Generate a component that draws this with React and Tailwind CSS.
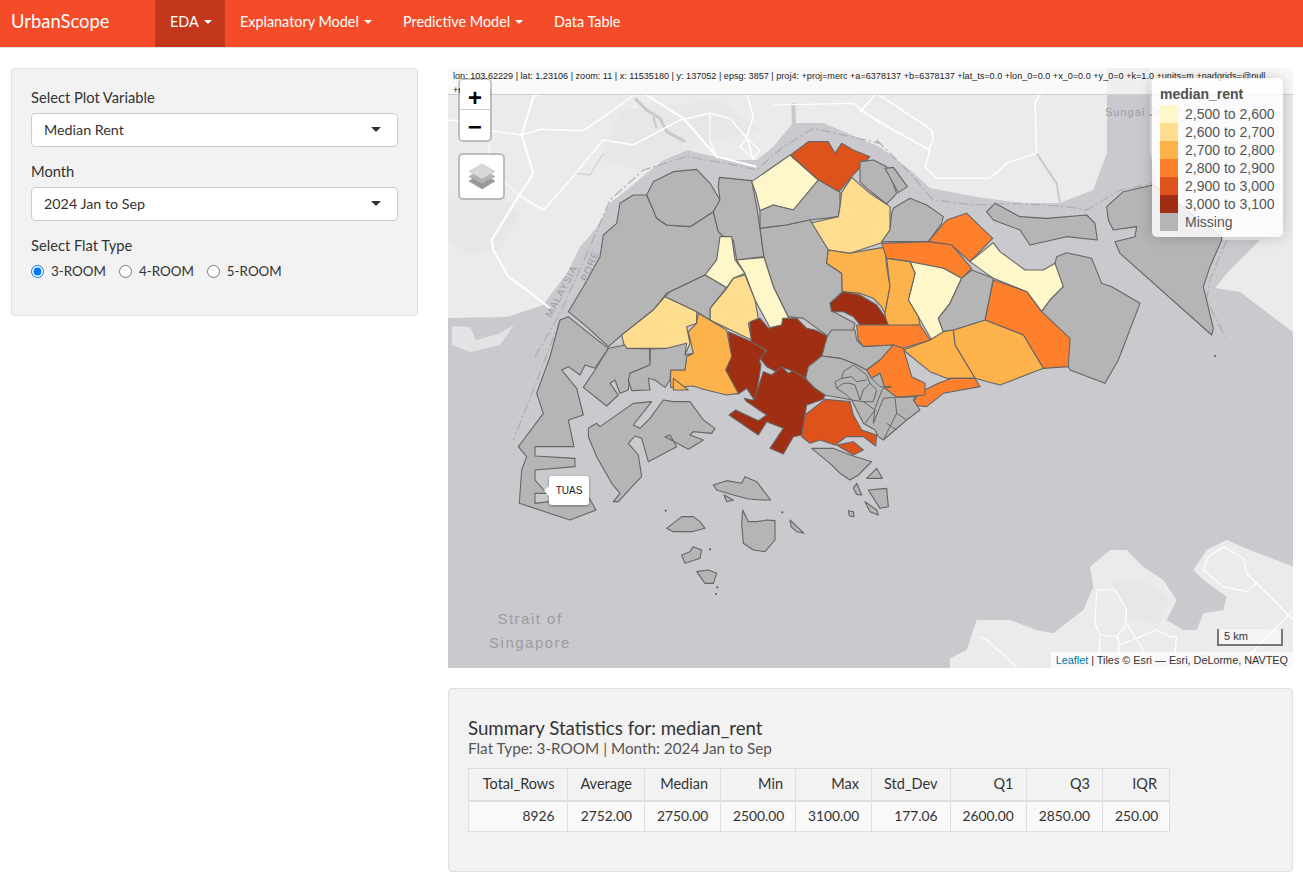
import { useState } from 'react';

const FONT = "font-['Lato','Open_Sans',sans-serif]";
const ARIAL = "font-['Liberation_Sans',Arial,sans-serif]";

// map outlines are traced per crop: [originX, originY] and coordinates at 3x
const Z2 = [440, 60];
const Z3 = [860, 60];
const Z4 = [500, 300];
const Z6 = [950, 530];
const Z7 = [700, 280];

const C = {
  gray: '#b5b5b5',
  c1: '#fff6c9',
  c2: '#fede8e',
  c3: '#feb24c',
  c4: '#fe7f2c',
  c5: '#de521b',
  c6: '#a02e12',
};

const AREAS = [
  [Z2, C.gray, '385,755 430,680 480,590 490,525 530,490 540,430 580,405 620,405 640,450 650,475 680,495 750,500 820,455 835,515 848,527 830,600 795,645 680,700 640,750 590,790 545,825 505,860 440,800'],
  [Z2, C.gray, '620,405 640,365 700,335 770,328 810,370 840,420 820,455 750,500 680,495 650,475 640,450'],
  [Z2, C.gray, '838,352 935,362 950,440 960,505 972,590 890,600 880,540 848,527 835,515 820,455 840,420 835,380'],
  [Z2, C.c1, '935,365 1050,285 1135,360 1060,450 1000,435 960,452 948,400'],
  [Z2, C.c5, '1052,285 1105,245 1165,245 1185,280 1205,250 1240,270 1290,290 1235,350 1195,397 1135,360'],
  [Z2, C.gray, '960,452 1000,435 1060,450 1135,360 1200,397 1200,440 1195,470 1110,480 1040,495 960,505'],
  [Z2, C.c2, '1205,397 1235,352 1290,400 1350,440 1350,510 1325,548 1230,580 1165,570 1110,490 1195,470 1200,440'],
  [Z2, C.gray, '960,505 1040,495 1110,480 1165,570 1160,610 1205,640 1207,695 1170,730 1180,755 1245,790 1240,810 1165,830 1090,775 1045,770 1000,680 972,590'],
  [Z2, C.c1, '840,530 875,530 885,600 915,640 880,655 860,683 795,645 830,600'],
  [Z2, C.c1, '890,600 972,592 1000,680 1045,772 1025,795 990,803 945,720 915,640'],
  [Z2, C.c2, '915,645 945,720 955,775 925,790 935,840 810,780 810,745 860,685 880,655'],
  [Z2, C.gray, '795,645 860,683 810,745 810,780 770,755 675,710 690,695'],
  [Z2, C.c2, '675,710 770,755 770,790 740,800 750,850 735,885 680,865 555,865 545,825 640,750'],
  [Z2, C.c3, '1165,570 1230,580 1325,563 1335,565 1340,620 1350,680 1335,760 1325,740 1300,715 1260,700 1207,695 1205,640 1160,610'],

  [Z3, C.gray, '0,305 40,300 80,320 110,400 80,432 20,385 0,365'],
  [Z3, C.gray, '75,325 100,322 142,380 115,398'],
  [Z3, C.gray, '100,445 150,415 200,435 250,470 245,490 205,545 65,545 90,510 95,460'],
  [Z3, C.c4, '205,545 260,480 320,460 398,535 330,605 275,555'],
  [Z3, C.c4, '65,550 205,545 275,555 335,625 305,655 250,625 150,605 80,595'],
  [Z3, C.c1, '330,605 400,548 420,575 495,630 550,630 585,610 605,650 610,680 570,720 545,755 500,695 400,655'],
  [Z3, C.gray, '380,455 405,430 480,470 560,475 680,465 705,490 712,540 620,530 510,555 480,510 400,480'],
  [Z3, C.gray, '545,755 570,720 610,680 585,610 590,590 620,578 695,595 725,670 755,680 840,730 775,900 735,970 630,930'],
  [Z3, C.gray, '740,440 790,395 880,375 1085,530 1085,540 1050,620 1030,680 1060,805 1055,825 780,580 765,545 825,530 830,500 760,510 745,480'],
  [Z3, C.c4, '400,660 500,695 545,755 630,835 625,920 550,925 490,825 375,780'],
  [Z3, C.c3, '280,810 375,780 490,825 550,925 420,975 345,955 285,855'],
  [Z3, C.c1, '150,605 250,625 305,655 270,730 235,775 255,830 215,840 175,770 145,720 165,640'],
  [Z3, C.gray, '305,655 335,630 400,655 375,780 280,810 250,815 235,775 270,730'],
  [Z3, C.c3, '80,595 150,605 165,640 145,720 175,770 180,795 80,800 75,760 90,680'],
  [Z3, C.c3, '250,815 280,810 285,855 345,955 260,955 210,935 130,870 210,840'],
  [Z3, C.c4, '156,1035 175,1000 235,970 275,955 345,955 360,980 250,1000 200,1040'],

  [Z7, C.c6, '390,70 430,35 480,45 530,75 555,110 565,135 480,135 460,110 430,95 395,95'],
  [Z7, C.c4, '470,135 565,135 660,135 690,180 610,205 580,195 490,200 475,180'],
  [Z7, C.gray, '395,150 465,150 470,180 490,200 580,195 540,240 500,270 460,250 420,235 365,228 380,170'],
  [Z7, C.c4, '500,270 540,240 580,195 610,205 635,290 675,310 675,345 590,352 555,325 540,280 515,295'],
  [Z7, C.c6, '150,125 180,115 205,145 245,135 248,115 290,115 320,145 345,150 382,168 365,228 320,290 305,295 270,270 245,262 235,278 200,260 180,235 200,212 155,185 150,150'],
  [Z7, C.c6, '85,155 155,185 198,212 178,240 183,255 170,340 165,362 140,325 115,342 90,335 75,290 75,265 93,235'],
  [Z7, C.gray, '318,290 325,260 365,228 420,235 460,250 500,270 515,295 540,280 555,325 590,352 650,350 640,360 660,390 620,420 585,450 550,480 535,470 525,450 490,430 455,360 430,355 370,345 345,340 325,325'],

  [Z4, C.c6, '763,298 790,215 815,225 845,200 865,220 880,212 915,235 945,265 975,285 970,298 920,315 905,405 880,410 850,462 810,445 850,385 800,365 775,405 687,345 707,330 775,362 800,345 740,305 733,295 755,300'],
  [Z4, C.c3, '595,40 680,90 695,170 677,210 715,280 680,285 610,268 580,258 512,262 512,210 555,210 560,165 580,160 565,95 590,70'],
  [Z4, C.c3, '520,235 565,270 520,270'],
  [Z4, C.gray, '325,145 375,135 380,145 450,147 450,195 390,220 385,270 360,280 345,240 330,250 355,285 320,318 250,262 285,210'],
  [Z4, C.gray, '450,147 500,145 560,130 555,165 580,160 560,170 555,210 512,210 510,240 495,262 465,240 445,235 450,270 395,272 385,240 390,220 450,195'],
  [Z4, C.gray, '180,60 205,50 260,95 325,145 285,205 255,195 240,225 205,200 185,210 230,265 250,345 205,360 222,440 105,440 105,468 225,475 225,500 105,510 105,540 140,580 105,580 105,610 265,590 288,630 210,660 58,610 65,510 80,470 55,440 70,420 130,340 110,280 150,170'],
  [Z4, C.gray, '265,385 290,370 300,380 400,310 455,305 400,375 420,385 450,355 490,300 520,305 570,305 610,360 645,385 635,400 580,395 570,405 610,420 565,448 495,410 510,405 530,440 445,485 425,415 405,408 385,430 415,465 425,530 410,545 355,605 340,605 360,580 335,550 290,470 265,410'],
  [Z4, C.c5, '905,410 915,345 975,298 1050,305 1060,345 1085,390 1130,405 1127,438 1090,410 1040,410 1005,435 960,420 930,430'],
  [Z4, C.c5, '1010,435 1060,425 1090,450 1060,465'],
  [Z4, C.gray, '935,445 1000,445 1050,465 1115,485 1075,525 1050,540 1020,520 990,490'],
  [Z4, C.gray, '1100,535 1130,505 1147,535'],
  [Z4, C.gray, '1060,565 1070,550 1085,585 1070,583'],
  [Z4, C.gray, '640,555 680,542 725,550 735,530 770,545 812,600 785,600 745,597 700,585 650,570'],
  [Z4, C.gray, '500,685 545,650 580,650 600,665 615,685 575,695 520,695'],
  [Z4, C.gray, '728,630 745,665 770,665 800,660 825,662 825,720 795,755 760,750 730,730 725,670'],
  [Z4, C.gray, '870,660 912,700 890,695 873,680'],
  [Z4, C.gray, '545,765 570,755 580,740 605,750 600,775 555,790'],
  [Z4, C.gray, '590,815 625,810 650,820 640,850 615,850'],
  [Z4, C.gray, '1095,605 1130,630 1135,645 1110,635'],
  [Z4, C.gray, '1105,570 1160,565 1165,620 1140,625'],
  [Z4, C.gray, '1045,632 1060,635 1062,650 1048,648'],
  [Z4, C.gray, '672,585 700,600 680,605'],
];

// borders between the small central districts
const INNER = [
  [Z7, '405,305 425,295 430,275 460,255 500,285 510,310 490,330 480,360 465,315 450,310 430,310 410,325 405,305'],
  [Z7, '425,295 455,290 470,305 500,300'],
  [Z7, '410,325 440,345 455,360 490,365 525,390 495,430'],
  [Z7, '510,310 530,330 520,365 490,365'],
  [Z7, '515,295 540,320 575,320 548,325 525,385 520,430 550,355 585,352 590,400 550,480'],
  [Z7, '590,400 620,420'],
  [Z7, '560,430 590,450'],
  [Z2, '630,865 630,900'],
];

const ROADS = [
  [Z2, '330,745 260,690 205,650 160,570 155,540 235,410 280,340 245,225 280,110 300,100', 2],
  [Z2, '24,180 70,185 130,210 245,225 300,208 430,212 520,150 580,105', 1.5],
  [Z2, '235,405 310,450 390,360 490,240 580,255 720,180 810,160 870,175 920,235', 1.5],
  [Z2, '620,105 730,175 830,290 950,320', 2],
  [Z2, '920,100 940,170 920,230 940,300', 1.5],
  [Z2, '810,165 810,240 830,295', 1.2],
  [Z2, '920,235 960,270 940,295 900,260 920,235', 1.2],
  [Z2, '1000,135 1240,130 1320,190', 1.2],
  [Z2, '150,250 140,310 235,405', 1],
  [Z3, '0,150 100,210 210,270 195,320 230,355 390,355 440,310 530,280 525,130 550,80', 1.5],
  [Z3, '0,80 50,100 0,155', 1.5],
  [Z3, '50,100 215,210 220,240 205,270', 1.5],
  [Z6, '440,180 495,180 530,240 525,290 500,320 450,315 435,280 440,180', 1.2],
  [Z6, '500,320 510,345 620,300 660,320 680,320 670,415', 1.2],
  [Z6, '530,280 580,360 590,415', 1.2],
  [Z6, '450,320 445,415', 1.2],
  [Z6, '505,320 510,415', 1.2],
  [Z6, '775,80 820,50 880,85 890,130 920,160 1030,270', 1.2],
  [Z6, '775,80 760,120 820,170 890,185 920,160', 1.2],
  [Z6, '860,415 1030,240', 1.2],
  [Z6, '90,320 110,330 200,410', 1.2],
];

const RIVERS = [
  [Z2, '585,115 620,150 660,175 680,215 735,245', 3],
  [Z2, '1060,130 1062,190', 4],
  [Z2, '640,170 650,205', 2],
  [Z2, '410,340 450,345 490,280', 1],
  [Z3, '530,280 590,370 600,430', 2],
];

const BOUNDARY = [
  [Z2, '285,890 360,760 450,560 510,420 610,330 740,290 860,310 950,330 1030,260 1120,205 1320,250'],
  [Z3, '50,240 150,340 220,420 340,435 480,430 620,440 680,450 780,390 880,370'],
  [Z3, '1100,540 1050,660 1040,720 1100,840'],
  [Z4, '180,60 100,270 40,420'],
];

const DOTS = [
  [Z3, 1065, 888], [Z4, 497, 632], [Z4, 847, 637], [Z4, 652, 862], [Z4, 648, 882], [Z4, 630, 748],
];

const LEGEND = [
  [C.c1, '2,500 to 2,600'],
  [C.c2, '2,600 to 2,700'],
  [C.c3, '2,700 to 2,800'],
  [C.c4, '2,800 to 2,900'],
  [C.c5, '2,900 to 3,000'],
  [C.c6, '3,000 to 3,100'],
  [C.gray, 'Missing'],
];

const STATS = [
  ['Total_Rows', '8926', 'w-[98.5px]'],
  ['Average', '2752.00', 'w-[77.5px]'],
  ['Median', '2750.00', 'w-[76px]'],
  ['Min', '2500.00', 'w-[75px]'],
  ['Max', '3100.00', 'w-[76px]'],
  ['Std_Dev', '177.06', 'w-[78.5px]'],
  ['Q1', '2600.00', 'w-[76px]'],
  ['Q3', '2850.00', 'w-[76.5px]'],
  ['IQR', '250.00', 'w-[67px]'],
];

const at = ([x, y]) => `translate(${x} ${y}) scale(0.33333)`;

function SingaporeMap() {
  return (
    <svg viewBox="448 68 845 600" className="block w-full h-full">
      <rect x="448" y="68" width="845" height="600" fill="#c9c9ce" />
      {/* land */}
      <polygon fill="#ebebeb" points="448,68 1107,68 1107,153 1093,190 1060,203 1020,203 977,197 930,188 910,170 880,147 823,123 793,123 773,147 757,160 733,160 707,155 687,150 667,157 647,173 627,190 610,203 597,227 580,247 567,273 543,305 507,317 448,318" />
      <polygon fill="#ebebeb" points="1150,68 1293,68 1293,332 1240,292 1215,288 1228,272 1260,240 1190,240 1165,235 1150,150" />
      <polygon fill="#e7e7e7" points="448,200 500,190 520,215 500,250 470,255 448,240" />
      <polygon fill="#e7e7e7" points="620,110 720,100 760,130 700,145 640,170 600,160" />
      <polygon fill="#e3e3e5" points="452,326 470,327 476,340 498,334 514,325 500,345 470,352 452,345" />
      <g transform={at(Z6)}>
        <polygon fill="#ebebeb" points="0,415 0,385 50,360 80,270 180,270 260,300 310,310 400,240 430,170 420,110 480,60 530,60 580,110 640,150 680,210 650,270 700,300 740,300 760,250 820,240 830,200 760,150 730,120 770,60 830,30 900,60 1030,110 1030,415" />
        <polygon fill="#e7e7e7" points="480,150 600,160 660,210 630,280 540,270" />
      </g>
      {RIVERS.map(([o, p, w], i) => (
        <polyline key={i} transform={at(o)} points={p} fill="none" stroke="#c9c9ce" strokeWidth={w} vectorEffect="non-scaling-stroke" />
      ))}
      {ROADS.map(([o, p, w], i) => (
        <polyline key={i} transform={at(o)} points={p} fill="none" stroke="#ffffff" strokeWidth={w} vectorEffect="non-scaling-stroke" />
      ))}
      {BOUNDARY.map(([o, p], i) => (
        <polyline key={i} transform={at(o)} points={p} fill="none" stroke="#adadb2" strokeWidth="1.2" strokeDasharray="10 3 2 3" vectorEffect="non-scaling-stroke" />
      ))}
      {/* planning areas */}
      {AREAS.map(([o, f, p], i) => (
        <polygon key={i} transform={at(o)} points={p} fill={f} stroke="#666666" strokeWidth="1.1" strokeLinejoin="round" vectorEffect="non-scaling-stroke" />
      ))}
      {INNER.map(([o, p], i) => (
        <polyline key={i} transform={at(o)} points={p} fill="none" stroke="#666666" strokeWidth="1" vectorEffect="non-scaling-stroke" />
      ))}
      {DOTS.map(([o, x, y], i) => (
        <circle key={i} transform={at(o)} cx={x} cy={y} r="3" fill="#555555" />
      ))}
      {/* basemap labels */}
      <g fill="#9c9ca1" className={ARIAL}>
        <text x="530" y="624" textAnchor="middle" fontSize="15" letterSpacing="1.5">Strait of</text>
        <text x="530" y="648" textAnchor="middle" fontSize="15" letterSpacing="1.5">Singapore</text>
        <text x="1105" y="116" fontSize="11" letterSpacing="1">Sungai Johor</text>
        <text transform="translate(551 318) rotate(-62)" fontSize="10" letterSpacing="1">MALAYSIA</text>
        <text transform="translate(587 282) rotate(-68)" fontSize="10" letterSpacing="1">PORE</text>
        <text x="1200" y="663" fontSize="11" letterSpacing="1" fill="#c4c4c4">PULAU BATAM</text>
      </g>
    </svg>
  );
}

function MapPanel() {
  return (
    <div className={`relative h-[600px] overflow-hidden ${ARIAL}`}>
      <SingaporeMap />

      <div className="absolute inset-x-0 top-0 h-[27px] px-[5px] bg-white/70 border-b border-[#d0d0d0] text-[9.1px] leading-[14px] pt-[1px] text-[#222] overflow-hidden">
        lon: 103.62229 | lat: 1.23106 | zoom: 11 | x: 11535180 | y: 137052 | epsg: 3857 | proj4: +proj=merc +a=6378137 +b=6378137 +lat_ts=0.0 +lon_0=0.0 +x_0=0.0 +y_0=0 +k=1.0 +units=m +nadgrids=@null +no_defs
      </div>

      {/* zoom buttons */}
      <div className="absolute left-[10px] top-[10px] w-[34px] border-2 border-black/20 rounded-[5px] bg-clip-padding">
        <div className="h-[30px] pt-[10px] bg-white rounded-t-[3px] border-b border-[#ccc] flex items-center justify-center text-[24px] leading-none font-bold text-black font-['Liberation_Mono',monospace]">+</div>
        <div className="h-[30px] pt-[8px] bg-white rounded-b-[3px] flex items-center justify-center text-[24px] leading-none font-bold text-black font-['Liberation_Mono',monospace]">−</div>
      </div>

      {/* layers button */}
      <div className="absolute left-[10px] top-[85px] w-[47px] h-[47px] bg-white border-2 border-black/20 rounded-[5px] bg-clip-padding flex items-center justify-center">
        <svg width="28" height="27" viewBox="0 0 28 27">
          <path d="M14 11 L27 18 L14 26 L1 18 Z" fill="#9a9a9a" stroke="#888" strokeWidth=".5" />
          <path d="M14 6.5 L27 13.5 L14 21 L1 13.5 Z" fill="#b4b4b4" stroke="#8c8c8c" strokeWidth=".5" />
          <path d="M14 1 L27 8.5 L14 16 L1 8.5 Z" fill="#d8d8d8" stroke="#b5b5b5" strokeWidth=".5" />
        </svg>
      </div>

      {/* legend */}
      <div className="absolute right-[10px] top-[10px] w-[131px] h-[159px] bg-white/80 rounded-[5px] shadow-[0_0_15px_rgba(0,0,0,0.2)] pl-2 pt-[7px] text-[14px] leading-[18px] text-[#555]">
        <div className="font-bold text-[#505050] leading-[18px] mb-[2px]">median_rent</div>
        {LEGEND.map(([color, label]) => (
          <div key={label} className="flex h-[18px] items-center">
            <span className="w-[18px] h-[18px] mr-[7px]" style={{ backgroundColor: color }} />
            <span>{label}</span>
          </div>
        ))}
      </div>

      {/* scale bar */}
      <div className="absolute right-[10px] bottom-[22px] w-[66px] h-[17px] border-x-2 border-b-2 border-[#777] bg-white/50 text-[11px] leading-[15px] pl-[5px] text-[#333]">
        5 km
      </div>

      <div className="absolute right-0 bottom-0 h-[16px] px-[5px] bg-white/70 text-[10.85px] leading-[16px] text-[#333] whitespace-nowrap">
        <a href="#leaflet" className="text-[#0078a8]">Leaflet</a> | Tiles © Esri — Esri, DeLorme, NAVTEQ
      </div>

      {/* hover tooltip */}
      <div className="absolute left-[101px] top-[408px] w-[40px] h-[29px] bg-white rounded-[3px] shadow-[0_1px_3px_rgba(0,0,0,0.4)] flex items-center justify-center text-[10px] text-[#222]">
        <span className="absolute left-[-5px] top-[10px] border-y-[5px] border-r-[5px] border-y-transparent border-r-white" />
        TUAS
      </div>
    </div>
  );
}

function SelectField({ label, value, onChange, options }) {
  return (
    <div className="mb-[14px]">
      <label className="block mb-[5px] leading-[21px] text-[14.7px]">{label}</label>
      <div className="relative">
        <select
          value={value}
          onChange={(e) => onChange(e.target.value)}
          className="block w-full h-[34px] appearance-none bg-white border border-[#ccc] rounded-[4px] pl-3 pr-8 text-[14.3px] text-[#333]"
        >
          {options.map((o) => <option key={o}>{o}</option>)}
        </select>
        <span className="absolute right-[17px] top-[14px] w-0 h-0 border-x-[5px] border-t-[5px] border-x-transparent border-t-[#333] pointer-events-none" />
      </div>
    </div>
  );
}

function NavItem({ children, active, caret, width }) {
  return (
    <a href="#nav" className={`flex items-center h-[47px] pl-[15px] pb-[4px] text-white text-[14.4px] ${width} ${active ? 'bg-[#c3381c]' : ''}`}>
      {children}
      {caret && <span className="ml-[5px] w-0 h-0 border-x-[4px] border-t-[4px] border-x-transparent border-t-white" />}
    </a>
  );
}

export default function App() {
  const [variable, setVariable] = useState('Median Rent');
  const [month, setMonth] = useState('2024 Jan to Sep');
  const [flatType, setFlatType] = useState('3-ROOM');

  return (
    <div className={`${FONT} bg-white text-[#333] text-[14px] min-h-[884px]`}>
      <nav className="flex h-[48px] bg-[#f44c29] border-b border-[#e0e0e0]">
        <a href="#home" className="flex items-center w-[155px] pl-[11px] pb-[3px] text-white text-[18.4px]">UrbanScope</a>
        <NavItem active caret width="w-[70px]">EDA</NavItem>
        <NavItem caret width="w-[163px]">Explanatory Model</NavItem>
        <NavItem caret width="w-[151px]">Predictive Model</NavItem>
        <NavItem width="w-[97px]">Data Table</NavItem>
      </nav>

      <div className="flex gap-[30px] pl-[11px] pr-[10px] pt-[20px]">
        <aside className="w-[407px] shrink-0">
          <div className="h-[248px] bg-[#f2f2f2] border border-[#e0e0e0] rounded-[4px] px-[19px] pt-[18px]">
            <SelectField label="Select Plot Variable" value={variable} onChange={setVariable} options={['Median Rent', 'Transactions']} />
            <SelectField label="Month" value={month} onChange={setMonth} options={['2024 Jan to Sep', '2023 Jan to Dec']} />
            <div>
              <div className="mb-[5px] leading-[21px] text-[14.7px]">Select Flat Type</div>
              <div className="flex gap-[13px]">
                {['3-ROOM', '4-ROOM', '5-ROOM'].map((t) => (
                  <label key={t} className="flex items-center gap-[7px] leading-[21px] text-[13.4px]">
                    <input
                      type="radio"
                      name="flat"
                      checked={flatType === t}
                      onChange={() => setFlatType(t)}
                      className="w-[13px] h-[13px] m-0 accent-[#0075ff]"
                    />
                    {t}
                  </label>
                ))}
              </div>
            </div>
          </div>
        </aside>

        <main className="flex-1 min-w-0">
          <MapPanel />

          <div className="mt-[20px] h-[184px] bg-[#f2f2f2] border border-[#e0e0e0] rounded-[4px] px-[19px] pt-[28px]">
            <div className="text-[18.7px] leading-[22px] text-[#333]">Summary Statistics for: median_rent</div>
            <div className="text-[15.3px] leading-[18px] text-[#555] mb-[11px]">Flat Type: 3-ROOM | Month: 2024 Jan to Sep</div>
            <table className="table-fixed border-collapse w-[701.5px] text-right text-[13.8px]">
              <thead>
                <tr>
                  {STATS.map(([h, , w]) => (
                    <th key={h} className={`${w} h-[32px] px-3 font-normal text-[14.5px] border border-[#ddd] border-b-2`}>{h}</th>
                  ))}
                </tr>
              </thead>
              <tbody>
                <tr className="bg-[#f9f9f9]">
                  {STATS.map(([h, v]) => (
                    <td key={h} className="h-[31px] px-3 border border-[#ddd]">{v}</td>
                  ))}
                </tr>
              </tbody>
            </table>
          </div>
        </main>
      </div>
    </div>
  );
}
